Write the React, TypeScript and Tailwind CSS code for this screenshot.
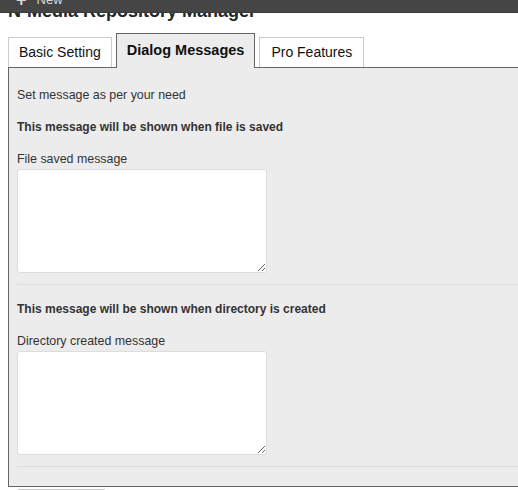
import React from "react";

export default function App() {
  return (
    <div className="relative w-[518px] h-[490px] overflow-hidden bg-white" style={{ fontFamily: '"Liberation Sans", Arial, sans-serif' }}>
      {/* admin bar overlay */}
      <div className="absolute left-0 top-0 w-full h-[13px] bg-[#454545] z-10 overflow-hidden border-b border-[#3a3a3a]">
        <div className="absolute left-[16px] top-[-8px] flex items-center gap-[10px] text-[#d8d8d8] text-[13px] leading-[16px]">
          <span className="text-[18px] font-bold leading-[16px]">+</span>
          <span>New</span>
        </div>
      </div>

      <div className="pl-2 pt-0">
        <h2 className="text-[18px] font-bold leading-[20px] text-[#23282d] mt-[1px] whitespace-nowrap">N-Media Repository Manager</h2>

        {/* tabs */}
        <div className="flex items-end gap-[4px] mt-[12px] relative z-[1]">
          <div className="h-[30px] px-[10px] flex items-center bg-white border border-[#cccccc] border-b-0 text-[14px] text-[#111]">Basic Setting</div>
          <div className="h-[35px] px-[10px] flex items-center bg-[#ececec] border border-[#666] border-b-0 text-[14.5px] font-bold text-[#111] mb-[-1px] pb-[0px]">Dialog Messages</div>
          <div className="h-[30px] px-[11px] flex items-center bg-white border border-[#cccccc] border-b-0 text-[14px] text-[#111]">Pro Features</div>
        </div>

        {/* panel */}
        <div className="bg-[#ececec] border-l border-t border-b border-[#666] pt-[19px] pl-2 h-[420px] text-[12.4px] leading-4 text-[#333]">
          <p>Set message as per your need</p>
          <p className="mt-4 font-bold text-[12px]">This message will be shown when file is saved</p>
          <p className="mt-4">File saved message</p>
          <textarea className="block mt-[2px] w-[250px] h-[104px] bg-white border border-[#dddddd] rounded-[3px] resize-y" />
          <div className="mt-[11px] h-px bg-[#dcdcdc]" />
          <p className="mt-4 font-bold text-[12px]">This message will be shown when directory is created</p>
          <p className="mt-4">Directory created message</p>
          <textarea className="block mt-[2px] w-[250px] h-[104px] bg-white border border-[#dddddd] rounded-[3px] resize-y" />
          <div className="mt-[11px] h-px bg-[#dcdcdc]" />
        </div>
        <div className="ml-[9px] mt-[2px] w-[89px] h-[20px] rounded-[3px] bg-[#c8c8c8]" />
      </div>
    </div>
  );
}
